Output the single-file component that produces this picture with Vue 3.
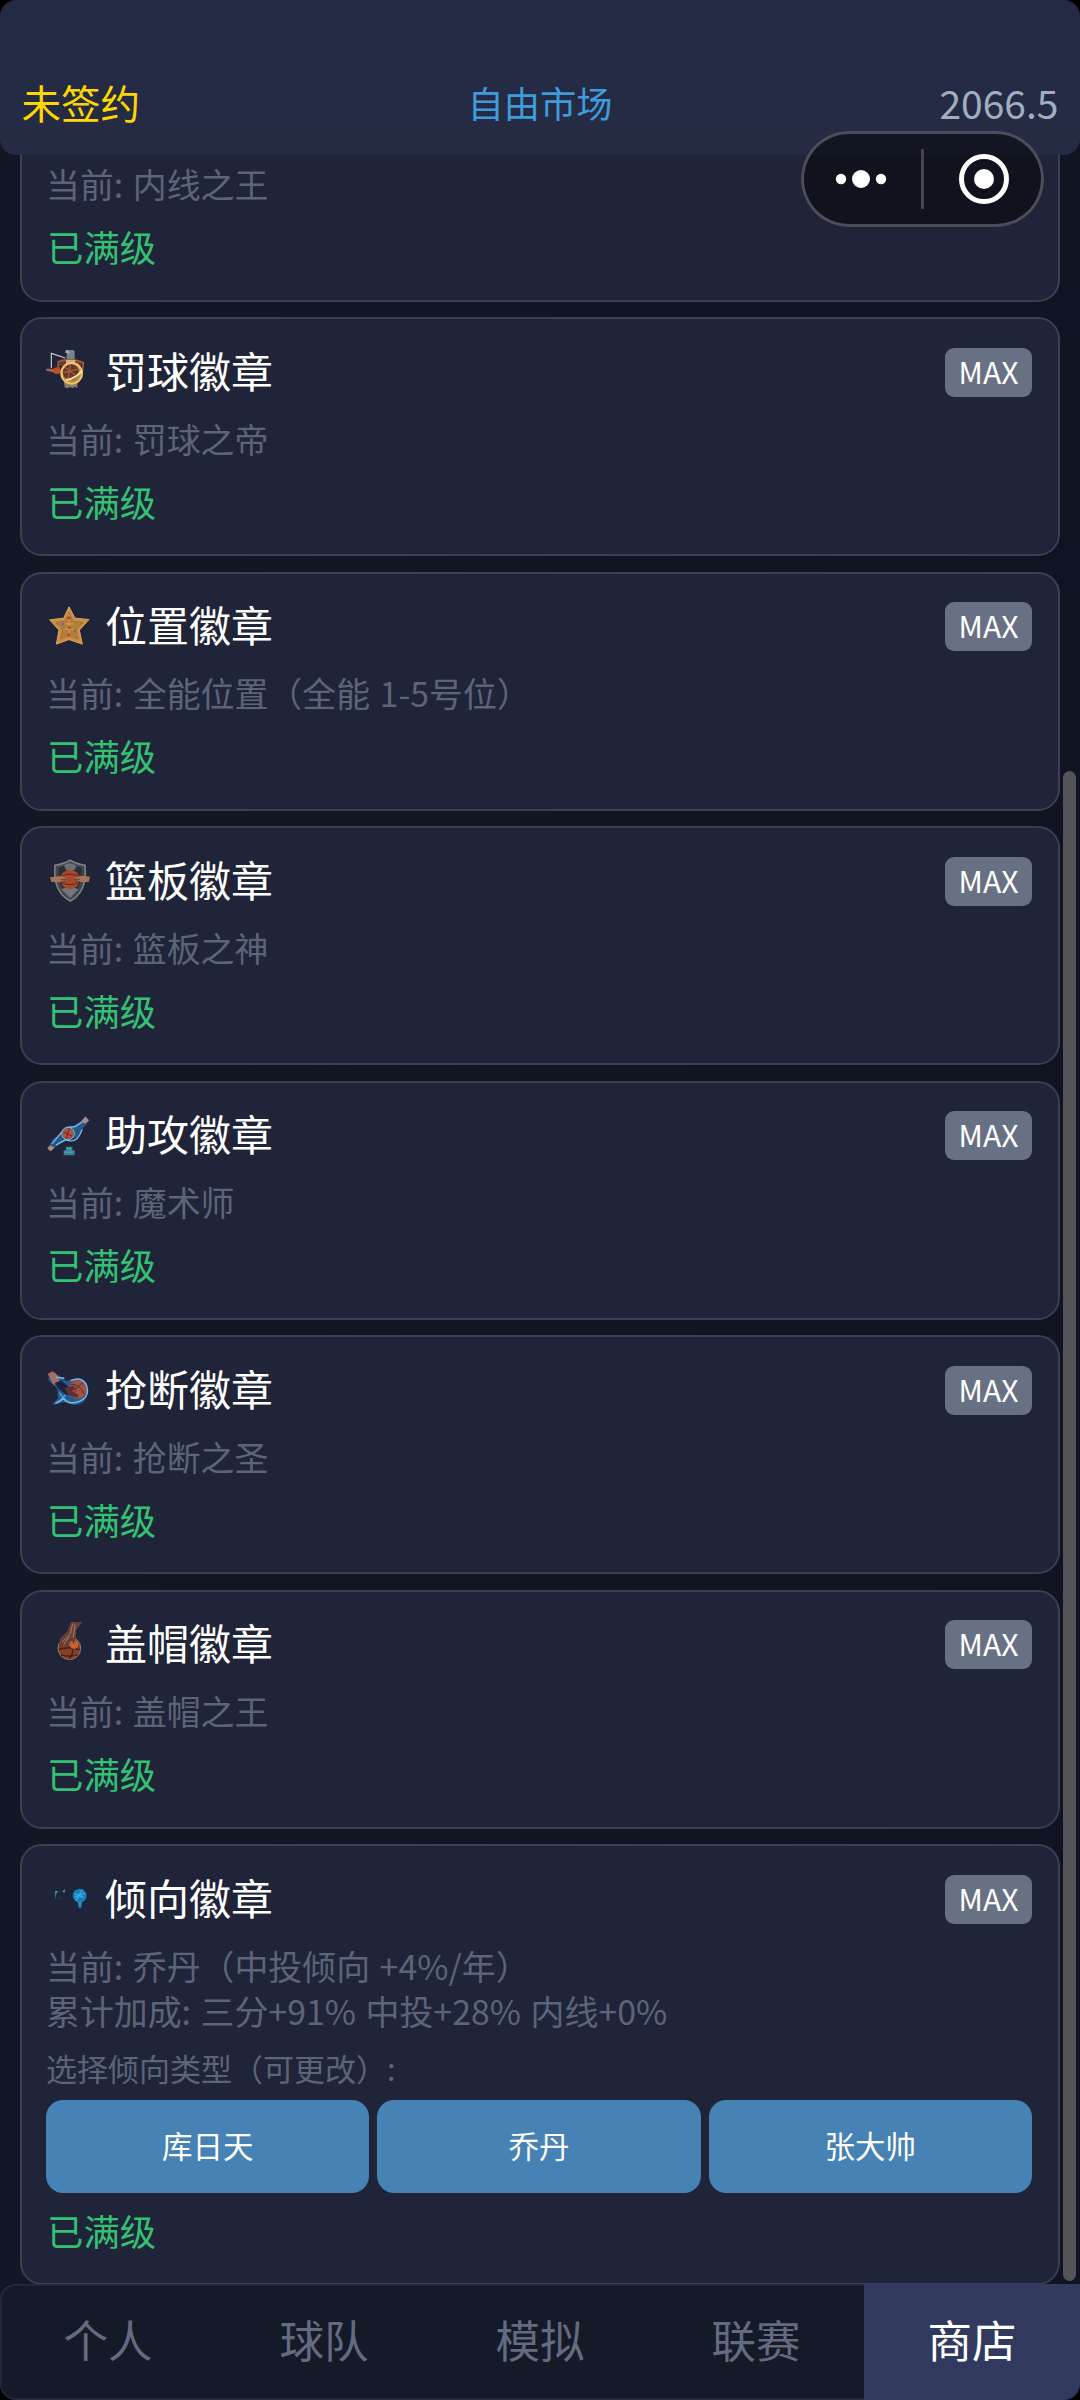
<script setup>
const badges = [
  { id: 'free', name: '罚球徽章', current: '当前: 罚球之帝', view: '18 30 132 132' },
  { id: 'position', name: '位置徽章', current: '当前: 全能位置（全能 1-5号位）', view: '18 28.5 132 132' },
  { id: 'rebound', name: '篮板徽章', current: '当前: 篮板之神', view: '18 27 132 132' },
  { id: 'assist', name: '助攻徽章', current: '当前: 魔术师', view: '18 25.5 132 132' },
  { id: 'steal', name: '抢断徽章', current: '当前: 抢断之圣', view: '18 24 132 132' },
  { id: 'block', name: '盖帽徽章', current: '当前: 盖帽之王', view: '18 37.5 132 132' },
  {
    id: 'tendency',
    name: '倾向徽章',
    current: '当前: 乔丹（中投倾向 +4%/年）',
    bonus: '累计加成: 三分+91% 中投+28% 内线+0%',
    options: ['库日天', '乔丹', '张大帅'],
    view: '0 0 132 132',
  },
]
const tabs = ['个人', '球队', '模拟', '联赛', '商店']
const activeTab = '商店'
</script>

<template>
  <div class="screen">
    <header class="top">
      <span class="team">未签约</span>
      <span class="market">自由市场</span>
      <span class="money">2066.5</span>
    </header>

    <div class="capsule">
      <svg width="243" height="96" viewBox="0 0 243 96">
        <g fill="#fff">
          <circle cx="40" cy="48" r="5.2" />
          <circle cx="60" cy="48" r="9" />
          <circle cx="80" cy="48" r="5.2" />
          <circle cx="183" cy="48" r="10" />
        </g>
        <circle cx="183" cy="48" r="22.5" fill="none" stroke="#fff" stroke-width="5" />
        <rect x="120" y="18" width="3" height="60" fill="#45464d" />
      </svg>
    </div>

    <main class="list">
      <section class="card clipped">
        <div class="current">当前: 内线之王</div>
        <div class="full">已满级</div>
      </section>

      <section v-for="b in badges" :key="b.id" class="card">
        <div class="head">
          <svg class="icon" :viewBox="b.view">
            <template v-if="b.id === 'free'">
              <path d="M34 84V40L76 54" fill="none" stroke="#c3c9d2" stroke-width="3.5" />
              <path d="M17 86h28v12l-26-6z" fill="#a5604d" />
              <circle cx="51" cy="92" r="10" fill="#c74a22" />
              <path d="M76 30q16-8 28 4v26H80V40z" fill="#72858d" />
              <path d="M74 37l16 4-8-11z" fill="#a8b9bc" />
              <path d="M72 126h40v18l-8-4-6 5-8-4-8 4-8-3z" fill="#8b8068" />
              <ellipse cx="91" cy="70" rx="39" ry="12" fill="#6c3a2c" />
              <path d="M52 66q39-15 78 2l-2 22q-5 8-14 10M54 70q0 22 14 32" fill="none" stroke="#a35c3a" stroke-width="5" />
              <path d="M78 60h28v22H78z" fill="#c3b498" />
              <circle cx="95" cy="100" r="31" fill="#b68a45" />
              <circle cx="92" cy="96" r="24" fill="#693528" />
              <path d="M75 82l30 22M92 74l-8 40M70 98l42-10" stroke="#a2603b" stroke-width="4" />
              <circle cx="95" cy="100" r="31" fill="none" stroke="#efc56c" stroke-width="6" />
              <path d="M78 120q28-3 48-28" fill="none" stroke="#ffe398" stroke-width="6" />
            </template>
            <template v-else-if="b.id === 'position'">
              <path d="M87 37l18 34 42 4-29 32 9 42-40-14-38 14 8-42-28-31 42-5z" fill="#c98d45" stroke="#dba85e" stroke-width="3" stroke-linejoin="round" />
              <path d="M87 54l12 27 29 3-20 22 6 27-27-10-25 10 6-27-20-22 28-4z" fill="#b97d3a" stroke="#9a642f" stroke-width="2" />
              <path d="M87 58v62M74 88h28M74 104h28" stroke="#cf9a4b" stroke-width="4" />
              <g fill="#a83a31"><circle cx="87" cy="70" r="4" /><circle cx="88" cy="99" r="4" /><circle cx="86" cy="121" r="4" /></g>
              <circle cx="69" cy="89" r="4" fill="#4d6fae" />
              <circle cx="104" cy="88" r="4" fill="#719b57" />
              <circle cx="104" cy="109" r="4" fill="#5878a2" />
            </template>
            <template v-else-if="b.id === 'rebound'">
              <path d="M90 31q24 13 45 15 8 78-44 107Q38 126 45 46q22-2 45-15z" fill="#42464c" stroke="#7c8085" stroke-width="5" />
              <path d="M90 40l35 15q3 60-35 86-38-27-34-86z" fill="#2b2e34" />
              <path d="M64 118l24-10 28 10-26 26z" fill="#73767b" />
              <path d="M72 46q18-14 38 2l-6 12H78z" fill="#6b7077" />
              <circle cx="90" cy="88" r="29" fill="#a8492d" />
              <path d="M62 80q28-16 56 0M63 98q28 12 54 0" fill="none" stroke="#5c271e" stroke-width="3" />
              <path d="M30 82l32-4 16 5v5l-18 9-26-1zM150 80l-28-3-18 6v5l18 9 24-1z" fill="#a8735b" />
              <path d="M62 88h18M64 94h12M102 88h18M106 94h12" stroke="#6f3f31" stroke-width="3" />
            </template>
            <template v-else-if="b.id === 'assist'">
              <path d="M22 132l16-28 24-16q10-27 38-24l22-14 16-14 11 11-20 25q-8 30-38 32L56 119l-22 20z" fill="#295783" />
              <path d="M36 118l24-29q16-24 45-22l30-20M48 122l28-16q36 14 50-31" fill="none" stroke="#73b7ea" stroke-width="4" />
              <path d="M22 132l8-9 14 6-12 11zM136 36l10 12-10 9-12-7z" fill="#b7877c" />
              <circle cx="84" cy="87" r="17" fill="#b64e34" />
              <path d="M70 81l26 14M88 71l-9 31" stroke="#582b32" stroke-width="3" />
              <circle cx="84" cy="87" r="19" fill="none" stroke="#72bde8" stroke-width="3" />
              <path d="M77 127h20v10h7v15H71v-15h7z" fill="#3a8296" />
              <path d="M75 143h25M80 132h15" stroke="#69bac4" stroke-width="3" stroke-dasharray="5 3" />
            </template>
            <template v-else-if="b.id === 'steal'">
              <path d="M28 42l28 4 22 17 30-7q35 7 35 39-1 38-42 40l-27-9-38 10 18-22-2-28-27-26z" fill="#265b8c" />
              <path d="M36 66l28 8M52 130l25-26M58 98l18 24" stroke="#4ba5dd" stroke-width="4" />
              <path d="M23 42l14-8 12 7 12 27-20 7z" fill="#a76c60" />
              <path d="M44 70l19-9 28 24-8 22-24-17z" fill="#18243f" />
              <circle cx="113" cy="88" r="28" fill="#a25341" />
              <path d="M90 72q30 0 43 30M98 111q8-30 32-44" fill="none" stroke="#542d37" stroke-width="3" />
              <path d="M73 84l26-7 9 8-12 8 20 12-4 8-28-9z" fill="#5c3134" />
              <path d="M92 62q30-14 46 10 15 37-20 52-30 12-46-8l-26 14M48 52l25 3" fill="none" stroke="#78b9e9" stroke-width="4.5" />
            </template>
            <template v-else-if="b.id === 'block'">
              <circle cx="88" cy="116" r="34" fill="#853f24" stroke="#a77765" stroke-width="3" />
              <path d="M56 120q32-11 64 1M62 136q28 8 52-1M94 86q15 30-5 62" fill="none" stroke="#3f211c" stroke-width="4" />
              <circle cx="102" cy="105" r="13" fill="#c56734" />
              <path d="M94 34l33 4-18 23-2 28-6 16-8-18-12 25-8-4 5-17-15 26-7-4 4-26 22-21z" fill="#654038" />
              <path d="M98 42l-7 32-25 24M105 44l-5 40M88 80l-16 24" fill="none" stroke="#ad7967" stroke-width="3" />
            </template>
            <template v-else>
              <path d="M27 42h11l-7 7-2 18zM49 43l9-7-3 12z" fill="#2ba4c4" />
              <path d="M37 66l9-3" stroke="#244e68" stroke-width="2" />
              <ellipse cx="101" cy="56" rx="21" ry="21" fill="#167eb8" />
              <path d="M95 72h13l-2 20h-8z" fill="#218dc0" />
              <path d="M86 50l27 12M108 39L91 71M85 62l32-14" stroke="#36aedb" stroke-width="4" />
            </template>
          </svg>
          <span class="name">{{ b.name }}</span>
          <span class="max">MAX</span>
        </div>
        <div class="current">{{ b.current }}</div>
        <template v-if="b.options">
          <div class="current bonus">{{ b.bonus }}</div>
          <div class="choose">选择倾向类型（可更改）:</div>
          <div class="options">
            <button v-for="o in b.options" :key="o" class="option">{{ o }}</button>
          </div>
        </template>
        <div class="full" :class="{ tight: b.options }">已满级</div>
      </section>
    </main>
    <div class="scrollbar"></div>

    <nav class="tabs">
      <div v-for="t in tabs" :key="t" class="tab" :class="{ active: t === activeTab }">
        <span>{{ t }}</span>
      </div>
    </nav>
  </div>
</template>

<style>
body {
  background: #000;
}
</style>

<style scoped>
.screen {
  position: relative;
  display: flex;
  flex-direction: column;
  width: 1080px;
  height: 2400px;
  overflow: hidden;
  background: linear-gradient(90deg, #131725, #101321);
  border-radius: 16px;
  font-family: "Noto Sans CJK SC", sans-serif;
  font-weight: 400;
}
.top {
  display: grid;
  grid-template-columns: 1fr auto 1fr;
  align-items: center;
  box-sizing: border-box;
  height: 155px;
  flex: none;
  padding: 48px 21.5px 0;
  border-radius: 16px;
  background: linear-gradient(#252a44, #242b43);
}
.team {
  color: #ffd700;
  font-size: 39.5px;
}
.market {
  color: #3f9bdc;
  font-size: 36.3px;
}
.money {
  justify-self: end;
  color: #a0aec0;
  font-size: 39px;
}
.capsule {
  position: absolute;
  left: 801px;
  top: 131px;
  width: 243px;
  height: 96px;
  border-radius: 48px;
  background: rgba(4, 5, 10, 0.55);
  box-shadow: inset 0 0 0 3px #4b4d5a;
  z-index: 2;
}
.capsule svg {
  display: block;
}
.list {
  display: flex;
  flex-direction: column;
  gap: 15.5px;
  height: 2129px;
  flex: none;
  padding: 0 20px;
}
.card {
  box-sizing: border-box;
  flex: none;
  padding: 28.5px 26px 0 24px;
  height: 239px;
  border: 2px solid #3b3e54;
  border-radius: 22px;
  background: #1f2438;
}
.card:last-child {
  height: 441px;
}
.clipped {
  height: 146.5px;
  padding-top: 6px;
  border-top: 0;
  border-radius: 0 0 22px 22px;
}
.clipped .current {
  margin-top: 0;
}
.head {
  display: flex;
  align-items: center;
  height: 49px;
}
.icon {
  width: 44px;
  height: 44px;
  margin: -1px 15px 0 0;
  filter: blur(0.4px);
}
.name {
  flex: 1;
  color: #fff;
  font-size: 42px;
  line-height: 49px;
  transform: translateY(-3px);
}
.max {
  width: 87px;
  height: 49px;
  border-radius: 9px;
  background: #687084;
  color: #fff;
  font-size: 30px;
  line-height: 46px;
  text-align: center;
}
.current {
  margin-top: 19px;
  color: #5c6478;
  font-size: 33.9px;
  line-height: 46px;
  white-space: nowrap;
  word-spacing: 2px;
}
.bonus {
  margin-top: -1px;
}
.full {
  margin-top: 16px;
  padding-left: 1px;
  color: #34c173;
  font-size: 36.4px;
  line-height: 46px;
}
.choose {
  margin-top: 14px;
  color: #5c6478;
  font-size: 31px;
  line-height: 40px;
}
.options {
  display: flex;
  gap: 8px;
  margin-top: 12.5px;
}
.option {
  flex: 1;
  height: 93px;
  padding: 0 0 4px;
  border: 0;
  border-radius: 17px;
  background: #4682b4;
  color: #fff;
  font: inherit;
  font-size: 30.5px;
}
.full.tight {
  margin-top: 14px;
}
.scrollbar {
  position: absolute;
  left: 1063px;
  top: 771px;
  width: 13px;
  height: 1510px;
  border-radius: 7px;
  background: #535458;
}
.tabs {
  display: flex;
  position: relative;
  box-sizing: border-box;
  height: 116px;
  border-radius: 16px;
  background: #151a28;
  box-shadow: inset 0 0 0 1.5px #262b42;
}
.tab {
  display: flex;
  flex: 1;
  align-items: center;
  justify-content: center;
  padding-bottom: 7px;
  color: #646a80;
  font-size: 44.5px;
}
.tab.active {
  background: #313a5e;
  border-radius: 0 0 16px 0;
  color: #fff;
}
</style>
